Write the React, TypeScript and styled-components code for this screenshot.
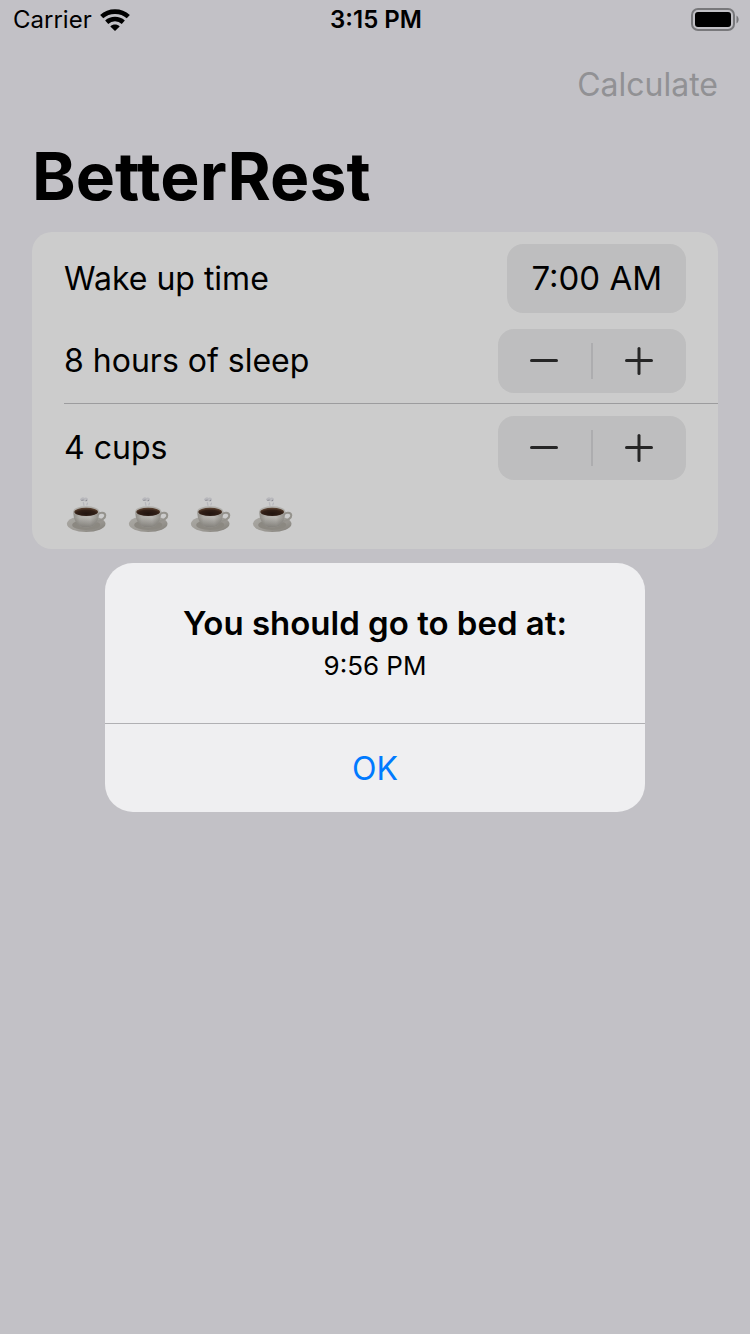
import React, { useState } from "react";
import styled, { createGlobalStyle } from "styled-components";

const GlobalStyle = createGlobalStyle`
  *, *::before, *::after { box-sizing: border-box; }
  body {
    margin: 0;
    background: #f3f2f8;
    color: #000;
    font-family: Inter, "Liberation Sans", sans-serif;
    font-size: 32px;
    line-height: 40px;
  }
  button {
    margin: 0;
    padding: 0;
    border: 0;
    background: none;
    color: inherit;
    font: inherit;
  }
`;

const Screen = styled.div`
  min-height: 100vh;
`;

const StatusBar = styled.header`
  display: grid;
  grid-template-columns: 1fr auto 1fr;
  align-items: center;
  height: 40px;
  padding: 0 11px 0 13px;
  font-size: 24px;
  line-height: 28px;
`;

const Carrier = styled.div`
  display: flex;
  align-items: center;
  gap: 8px;
`;

const Clock = styled.time`
  font-weight: 600;
`;

const BatterySlot = styled.div`
  display: flex;
  justify-content: flex-end;
`;

const NavBar = styled.nav`
  display: flex;
  justify-content: flex-end;
  align-items: center;
  height: 88px;
  padding: 2px 32px 0;
`;

const NavButton = styled.button`
  color: #b6b6ba;
`;

const Title = styled.h1`
  margin: 0;
  padding: 8px 32px 16px;
  font-size: 66px;
  font-weight: 700;
  line-height: 80px;
`;

const Form = styled.main`
  margin: 0 32px;
  border-radius: 20px;
  background: #fff;
`;

const Section = styled.section<{ $divided?: boolean }>`
  display: flex;
  flex-direction: column;
  gap: 16px;
  margin-left: 32px;
  padding: 12px 32px 10px 0;
  border-bottom: ${(p) => (p.$divided ? "1px solid #c4c4c6" : "0")};
`;

const Row = styled.div`
  display: flex;
  justify-content: space-between;
  align-items: center;
`;

const TimeButton = styled.button`
  padding: 14px 24px 15px;
  border-radius: 16px;
  background: #eeeeef;
  font-size: 33px;
`;

const StepperBox = styled.div`
  display: flex;
  align-items: center;
  height: 64px;
  border-radius: 16px;
  background: #eeeeef;
`;

const StepButton = styled.button`
  display: flex;
  justify-content: center;
  align-items: center;
  width: 93px;
  height: 64px;
`;

const StepDivider = styled.span`
  width: 2px;
  height: 36px;
  background: #d9d9db;
`;

const Cups = styled.div`
  display: flex;
  gap: 16px;
  height: 43px;
`;

const Overlay = styled.div`
  position: fixed;
  inset: 0;
  display: flex;
  justify-content: center;
  align-items: center;
  padding-top: 40px;
  background: rgba(0, 0, 0, 0.2);
`;

const Alert = styled.div`
  width: 540px;
  max-width: calc(100% - 64px);
  border-radius: 28px;
  background: #efeff1;
  text-align: center;
`;

const AlertBody = styled.div`
  padding: 40px 32px;
`;

const AlertTitle = styled.h2`
  margin: 0;
  font-size: 33px;
  font-weight: 600;
  line-height: 40px;
`;

const AlertText = styled.p`
  margin: 0;
  padding: 7px 0 1px;
  font-size: 26px;
  line-height: 32px;
`;

const AlertButton = styled.button`
  width: 100%;
  height: 89px;
  padding-top: 2px;
  border-top: 1px solid #b0b0b3;
  color: #007aff;
`;

function WifiIcon() {
  return (
    <svg width="30" height="22" viewBox="0 0 30 22" aria-hidden="true">
      <g fill="none" stroke="#000" strokeWidth="4.600">
        <path d="M1.700 7.600C9 .9 21 .9 28.300 7.600" />
        <path d="M6.700 13.200C11.300 9 18.700 9 23.300 13.200" />
      </g>
      <path d="M15 22l-4.700-4.600c2.600-2.400 6.800-2.400 9.400 0z" />
    </svg>
  );
}

function BatteryIcon() {
  return (
    <svg width="48" height="24" viewBox="0 0 48 24" aria-hidden="true">
      <rect x="1" y="1" width="42" height="21" rx="6" fill="none" stroke="#96969a" strokeWidth="2" />
      <rect x="4" y="4" width="36" height="15" rx="3" />
      <path d="M45.5 7.5c2.8 1.5 2.8 6.5 0 8z" fill="#96969a" />
    </svg>
  );
}

function StepIcon({ plus }: { plus?: boolean }) {
  return (
    <svg width="30" height="28" viewBox="0 0 30 28" fill="none" stroke="#303030" strokeWidth="3" strokeLinecap="round" aria-hidden="true">
      <path d="M1.5 13.5H26.5" />
      {plus && <path d="M14 1.5V26.5" />}
    </svg>
  );
}

function CupGradients() {
  return (
    <svg width="0" height="0" display="block" aria-hidden="true">
      <defs>
        <linearGradient id="cupBody" x1="0" x2="1" y1="0" y2="0">
          <stop offset="0" stopColor="#b4b1aa" />
          <stop offset=".25" stopColor="#dedcd6" />
          <stop offset=".65" stopColor="#e8e6e1" />
          <stop offset="1" stopColor="#b4b1aa" />
        </linearGradient>
        <linearGradient id="cupShade" x1="0" x2="0" y1="0" y2="1">
          <stop offset=".4" stopColor="#7a766e" stopOpacity="0" />
          <stop offset="1" stopColor="#7a766e" stopOpacity=".6" />
        </linearGradient>
        <linearGradient id="saucer" x1="0" x2="1" y1="0" y2="1">
          <stop offset="0" stopColor="#d6d4ce" />
          <stop offset=".55" stopColor="#c6c3bc" />
          <stop offset="1" stopColor="#a19d95" />
        </linearGradient>
        <radialGradient id="coffee" cx=".5" cy=".7" r=".6">
          <stop offset="0" stopColor="#2a1a14" />
          <stop offset=".7" stopColor="#3f281d" />
          <stop offset="1" stopColor="#6a4c38" />
        </radialGradient>
      </defs>
    </svg>
  );
}

function CupIcon() {
  return (
    <svg width="46" height="42" viewBox="0 2 46 42" aria-hidden="true">
      <ellipse cx="22.2" cy="29.8" rx="19.3" ry="8.3" fill="url(#saucer)" />
      <ellipse cx="22.2" cy="31" rx="14" ry="5" fill="#aeaaa2" />
      <path d="M34 20.500c2-2.500 7-2.500 7.300.8.2 3.400-4.800 5.300-9.300 6.500" fill="none" stroke="#bbb8b1" strokeWidth="2" />
      <path d="M9.300 17c0 7.500 2.400 12.500 6.700 15.200 2.700 1.500 9.700 1.500 12.400 0C32.700 29.500 35.200 24.500 35.200 17z" fill="url(#cupBody)" />
      <path d="M9.300 17c0 7.500 2.400 12.500 6.700 15.200 2.700 1.500 9.700 1.500 12.400 0C32.700 29.500 35.200 24.500 35.200 17z" fill="url(#cupShade)" />
      <ellipse cx="22.2" cy="17.200" rx="13" ry="5" fill="#dddbd6" />
      <ellipse cx="22.2" cy="17.900" rx="11.900" ry="4.100" fill="url(#coffee)" />
      <g fill="none" stroke="#e6e6ec" strokeWidth="2" strokeLinecap="round">
        <path d="M17 5.500c1.500-2 4-1 3 .7M21.500 4.500c1.500 0 2 1 1 2" />
        <path d="M19.300 8.500l.7 3M23.500 9l-.7 2" strokeWidth="1.2" />
      </g>
      <path d="M17.300 6.400l2.300-.4M21.500 6.800l1.500-.6" fill="none" stroke="#a9a9b2" strokeWidth="1" />
    </svg>
  );
}

interface StepperProps {
  label: string;
  onStep: (delta: number) => void;
}

function Stepper({ label, onStep }: StepperProps) {
  return (
    <StepperBox role="group" aria-label={label}>
      <StepButton type="button" aria-label="Decrement" onClick={() => onStep(-1)}>
        <StepIcon />
      </StepButton>
      <StepDivider />
      <StepButton type="button" aria-label="Increment" onClick={() => onStep(1)}>
        <StepIcon plus />
      </StepButton>
    </StepperBox>
  );
}

export default function App() {
  const [hours, setHours] = useState(8);
  const [cups, setCups] = useState(4);
  const [showAlert, setShowAlert] = useState(true);

  return (
    <Screen>
      <GlobalStyle />
      <CupGradients />
      <StatusBar>
        <Carrier>
          Carrier
          <WifiIcon />
        </Carrier>
        <Clock>3:15 PM</Clock>
        <BatterySlot>
          <BatteryIcon />
        </BatterySlot>
      </StatusBar>
      <NavBar>
        <NavButton type="button" onClick={() => setShowAlert(true)}>
          Calculate
        </NavButton>
      </NavBar>
      <Title>BetterRest</Title>
      <Form>
        <Section $divided>
          <Row>
            <span id="wake-label">Wake up time</span>
            <TimeButton type="button" aria-describedby="wake-label">
              7:00 AM
            </TimeButton>
          </Row>
          <Row>
            <span>{hours} hours of sleep</span>
            <Stepper label="Hours of sleep" onStep={(d) => setHours((h) => Math.min(12, Math.max(4, h + d)))} />
          </Row>
        </Section>
        <Section>
          <Row>
            <span>{cups} cups</span>
            <Stepper label="Cups of coffee" onStep={(d) => setCups((c) => Math.min(8, Math.max(1, c + d)))} />
          </Row>
          <Cups>
            {Array.from({ length: cups }, (_, i) => (
              <CupIcon key={i} />
            ))}
          </Cups>
        </Section>
      </Form>
      {showAlert && (
        <Overlay>
          <Alert role="alertdialog" aria-modal="true" aria-labelledby="alert-title" aria-describedby="alert-text">
            <AlertBody>
              <AlertTitle id="alert-title">You should go to bed at:</AlertTitle>
              <AlertText id="alert-text">9:56 PM</AlertText>
            </AlertBody>
            <AlertButton type="button" onClick={() => setShowAlert(false)}>
              OK
            </AlertButton>
          </Alert>
        </Overlay>
      )}
    </Screen>
  );
}
